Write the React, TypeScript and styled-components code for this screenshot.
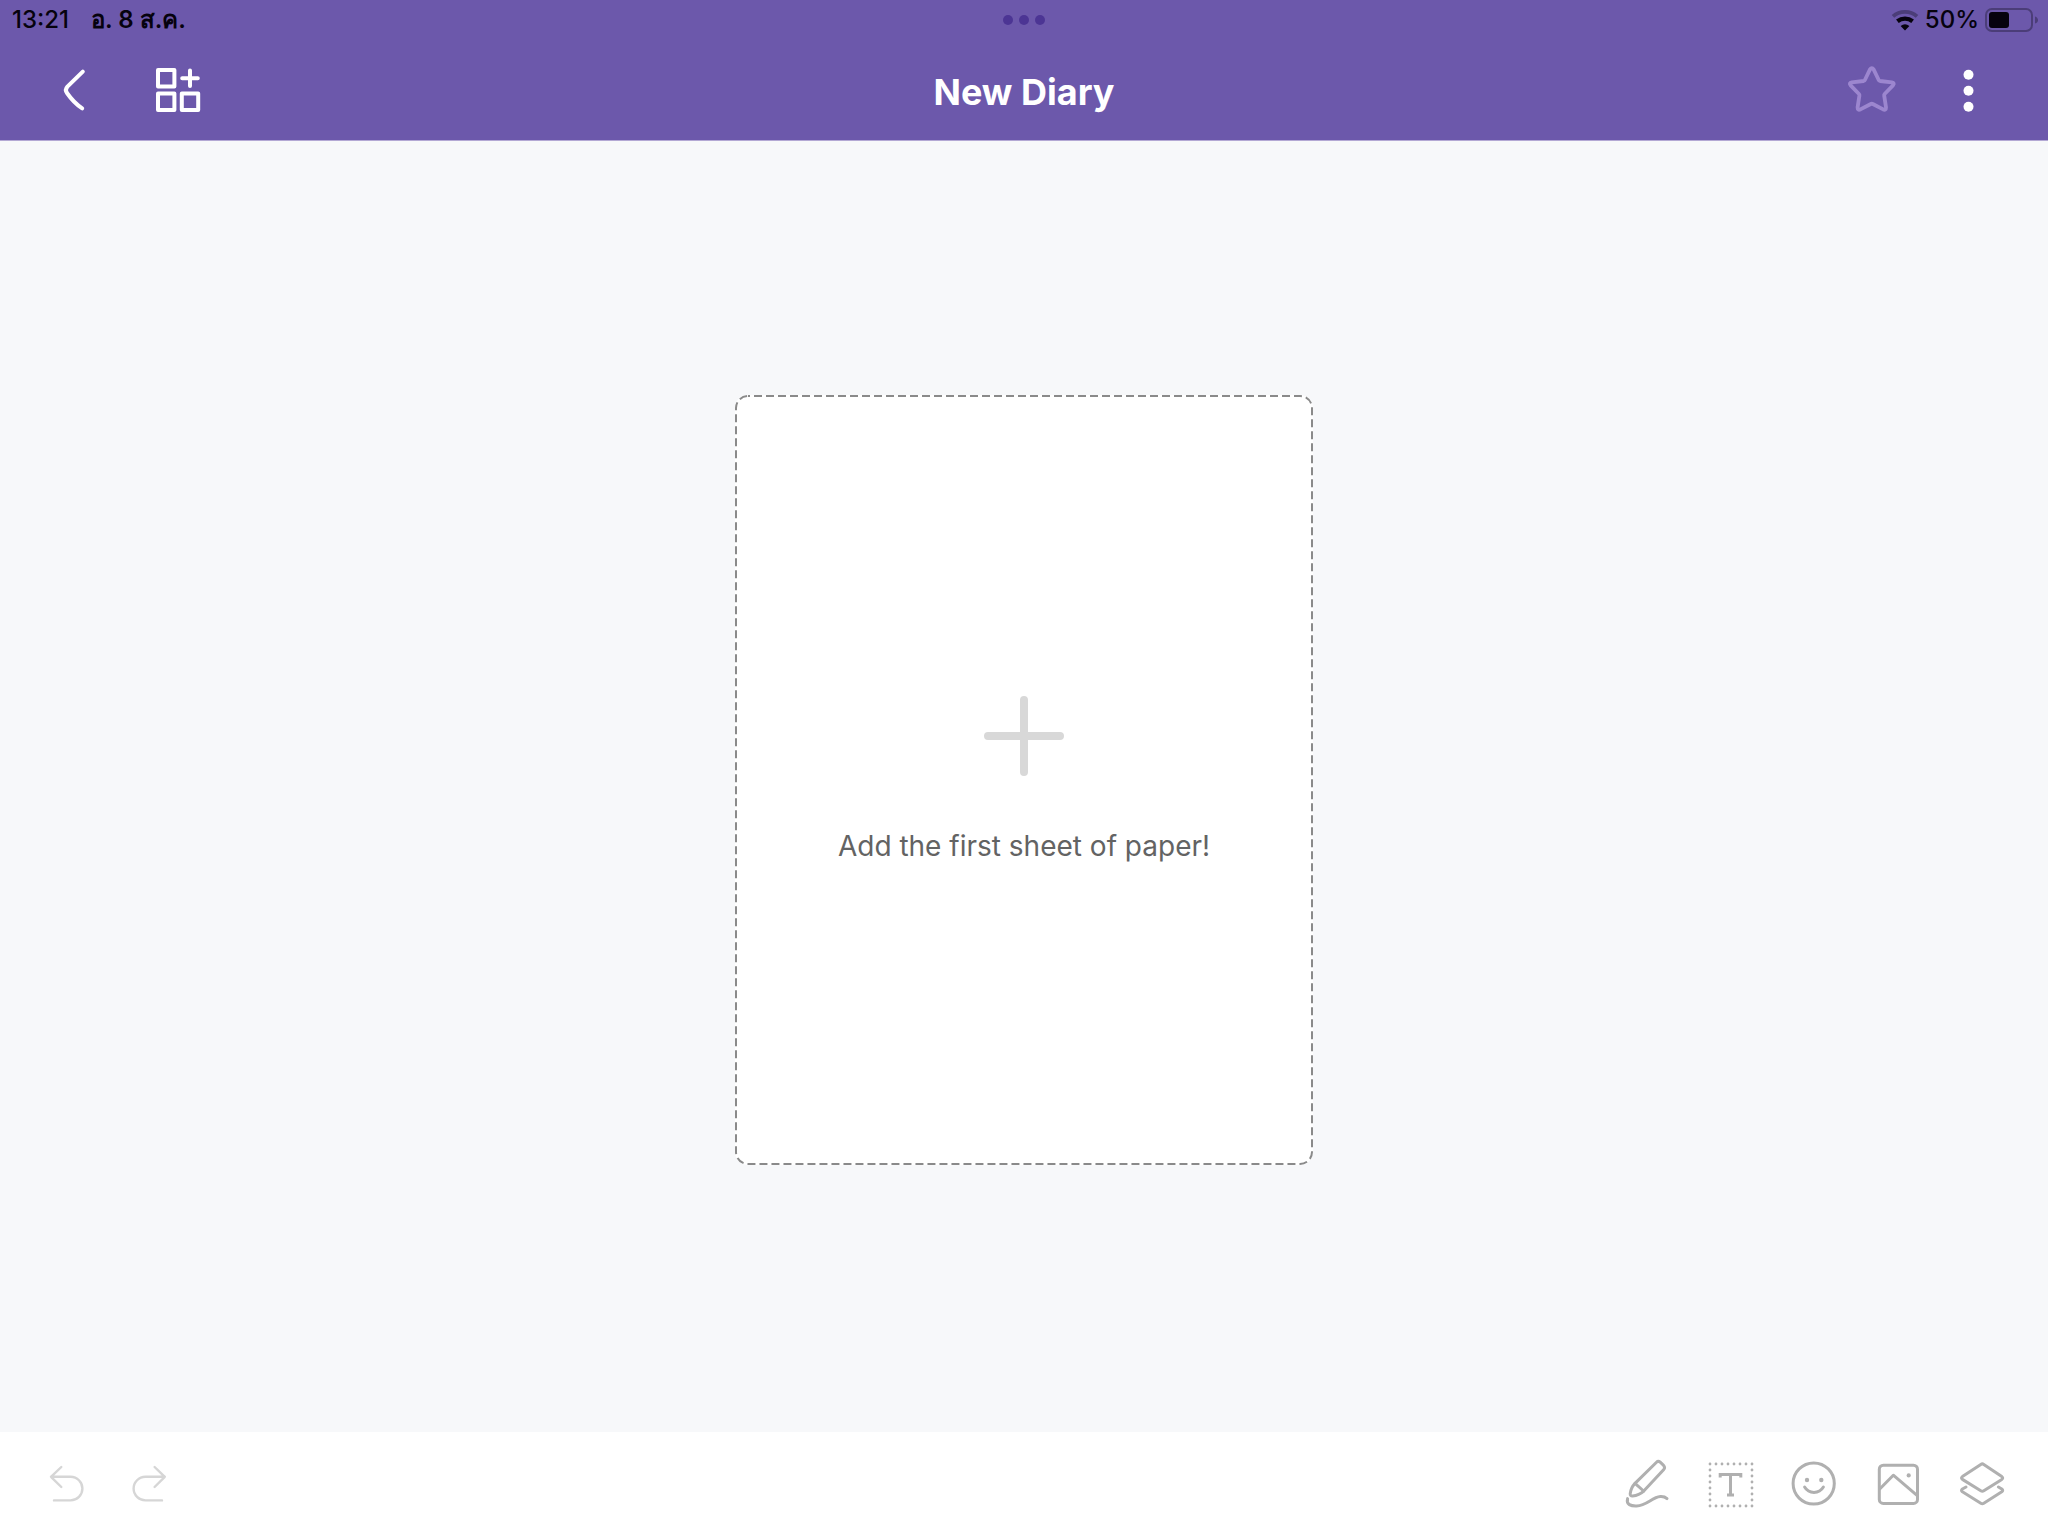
import React from "react";
import styled, { createGlobalStyle } from "styled-components";

const GlobalStyle = createGlobalStyle`
  *, *::before, *::after { box-sizing: border-box; }
  body {
    margin: 0;
    background: #f7f8fa;
    font-family: Inter, "Noto Sans", "Liberation Sans", sans-serif;
  }
`;

const Screen = styled.div`
  display: flex;
  flex-direction: column;
  min-height: 100vh;
`;

const Header = styled.header`
  background: #6c58ab;
  border-bottom: 1px solid #b3a8d4;
`;

const ThreeColumns = styled.div`
  display: grid;
  grid-template-columns: 1fr auto 1fr;
  align-items: center;
`;

const StatusBar = styled(ThreeColumns)`
  height: 40px;
  padding: 0 10px;
  color: #06020e;
  font-size: 24px;
  font-weight: 500;
  line-height: 28px;
`;

const DateText = styled.span`
  font-weight: 600;
`;

const NavBar = styled(ThreeColumns)`
  height: 100px;
  padding: 0 52px;
`;

const Group = styled.div<{ $gap: number; $end?: boolean; $inset?: number }>`
  display: flex;
  align-items: center;
  gap: ${(p) => p.$gap}px;
  justify-content: ${(p) => (p.$end ? "flex-end" : "flex-start")};
  padding: ${(p) => (p.$end ? `0 ${p.$inset ?? 0}px 0 0` : `0 0 0 ${p.$inset ?? 0}px`)};
`;

const Title = styled.h1`
  margin: 0;
  padding-top: 4px;
  color: #fff;
  font-size: 36px;
  font-weight: 700;
  line-height: 48px;
`;

const IconButton = styled.button<{ $color: string }>`
  display: flex;
  width: 48px;
  height: 48px;
  padding: 0;
  border: 0;
  background: none;
  color: ${(p) => p.$color};
  cursor: pointer;
`;

const Glyph = styled.svg`
  display: block;
  overflow: visible;
  fill: none;
  stroke: currentColor;
  stroke-linecap: round;
  stroke-linejoin: round;
`;

const Canvas = styled.main`
  flex: 1;
  display: flex;
  align-items: center;
  justify-content: center;
  padding: 40px 40px 53px;
`;

const Sheet = styled.button`
  position: relative;
  display: flex;
  flex-direction: column;
  align-items: center;
  justify-content: center;
  gap: 50px;
  width: 578px;
  max-width: 100%;
  aspect-ratio: 578 / 770;
  padding: 2px 0 0;
  border: 0;
  border-radius: 13px;
  background: #fff;
  color: #636363;
  font-family: inherit;
  font-size: 28px;
  line-height: 40px;
  cursor: pointer;
`;

const DashedFrame = styled.svg`
  position: absolute;
  inset: 1px;
  width: calc(100% - 2px);
  height: calc(100% - 2px);
  overflow: visible;
  fill: none;
  stroke: #8a8a8a;
  stroke-width: 2;
  stroke-dasharray: 8 4;
  stroke-dashoffset: 6;
`;

const Toolbar = styled.footer`
  display: flex;
  align-items: center;
  justify-content: space-between;
  height: 104px;
  padding: 0 42px;
  background: #fff;
`;

type IconProps = { stroke: number; children: React.ReactNode };

function Icon({ stroke, children }: IconProps) {
  return (
    <Glyph width="48" height="48" viewBox="0 0 48 48" strokeWidth={stroke} aria-hidden="true">
      {children}
    </Glyph>
  );
}

const dot = { fill: "currentColor", stroke: "none" };

const tools = [
  {
    label: "Pen",
    art: (
      <g transform="translate(1 0)">
        <path d="M33.5 2.2 Q35.3 .4 37.2 2.2 L40.6 5.4 Q42.4 7.4 40.8 9.4 L21 30.8 Q16 35.4 9.6 36 Q7 36.2 7.2 33.6 Q8 27.6 12 23.4 Z" />
        <path d="M12 23.4 L20.6 31" />
        <path d="M4.6 38.6 C3 44.6 8 46.2 13.6 46 C24 45.4 29 37.2 37.4 36.6 Q41.6 36.4 44 38.6" />
      </g>
    ),
  },
  {
    label: "Text",
    art: (
      <g transform="translate(1 0)">
        <path d="M3 4 H45 V46 H3 Z" strokeDasharray="0 6" strokeWidth="2.8" />
        <path d="M13.2 17.6 V14.4 H33.8 V17.6 M23.5 14.4 V35 M20 35 H27" strokeLinecap="butt" strokeLinejoin="miter" />
      </g>
    ),
  },
  {
    label: "Sticker",
    art: (
      <>
        <circle cx="23.7" cy="23.5" r="20.6" />
        <circle cx="17" cy="20" r="2.2" {...dot} />
        <circle cx="31.3" cy="20" r="2.2" {...dot} />
        <path d="M14.6 27 Q17.8 32.4 24 32.4 T33.4 27" />
      </>
    ),
  },
  {
    label: "Image",
    art: (
      <>
        <rect x="5.3" y="5.2" width="38.2" height="38.2" rx="4" />
        <path d="M6 28.7 L19.3 15.2 L43 35.4" />
        <circle cx="34.7" cy="15.4" r="2.1" {...dot} />
      </>
    ),
  },
  {
    label: "Layers",
    art: (
      <>
        <path d="M22.8 4.4 Q24.3 3.4 25.8 4.4 L43.8 16.6 Q45.6 18 43.8 19.4 L25.8 30.8 Q24.3 31.8 22.8 30.8 L4.4 19.4 Q2.6 18 4.4 16.6 Z" />
        <path d="M8 27 L4.4 29 Q2.6 30.4 4.4 31.8 L22.8 43.2 Q24.3 44.2 25.8 43.2 L43.8 31.8 Q45.6 30.4 43.8 29 L40.4 27" />
      </>
    ),
  },
];

export default function App() {
  return (
    <Screen>
      <GlobalStyle />
      <Header>
        <StatusBar>
          <Group $gap={22} $inset={2}>
            <span>13:21</span>
            <DateText>อ. 8 ส.ค.</DateText>
          </Group>
          <Glyph width="42" height="10" viewBox="0 0 42 10" aria-hidden="true">
            <g fill="#4c3594" stroke="none">
              <circle cx="5" cy="5" r="5" />
              <circle cx="21" cy="5" r="5" />
              <circle cx="37" cy="5" r="5" />
            </g>
          </Glyph>
          <Group $gap={6} $end>
            <Glyph width="28" height="20" viewBox="0 0 28 20" aria-hidden="true">
              <path d="M2 6.4 Q7 1.9 14 1.9 T26 6.4" stroke="#4b3d78" strokeWidth="3.8" strokeLinecap="butt" />
              <path d="M6.4 11.2 Q9.8 8.6 14 8.6 T21.6 11.2" strokeWidth="4.4" strokeLinecap="butt" />
              <path d="M9.6 16 Q14 12.4 18.4 16 L14 20.4 Z" {...dot} />
            </Glyph>
            <span>50%</span>
            <Glyph width="53" height="24" viewBox="0 0 53 24" aria-hidden="true">
              <rect x="1" y="1" width="46" height="22" rx="6" stroke="#4b3d78" strokeWidth="2" />
              <rect x="4" y="4" width="20" height="16" rx="3" {...dot} />
              <path d="M50 8.4 Q53 9.4 53 12 T50 15.6 Z" fill="#4b3d78" stroke="none" />
            </Glyph>
          </Group>
        </StatusBar>
        <NavBar>
          <Group $gap={54}>
            <IconButton $color="#fff" aria-label="Back">
              <Icon stroke={4}>
                <path d="M30.8 5.6 L15.4 20.6 Q12.6 23.6 15 27 Q21.6 36.6 30.2 42.4" />
              </Icon>
            </IconButton>
            <IconButton $color="#fff" aria-label="Page overview">
              <Icon stroke={4}>
                <rect x="4" y="4" width="16.4" height="16.4" />
                <rect x="4" y="27.6" width="16.4" height="16.4" />
                <rect x="27.8" y="27.6" width="16.4" height="16.4" />
                <path d="M36 4.4 V20 M28.2 12.2 H43.8" />
              </Icon>
            </IconButton>
          </Group>
          <Title>New Diary</Title>
          <Group $gap={48} $end $inset={4}>
            <IconButton $color="#9c86cf" aria-label="Favourite">
              <Icon stroke={3.8}>
                <path d="M22 3.4 Q23.8 .8 25.6 3.4 L30.6 13.8 Q31 14.8 32 15 L43.8 16.4 Q47 17 45 19.4 L36.6 28 Q36 28.6 36.2 29.6 L38 41.4 Q38 44.6 35.2 43.4 L24.8 38 Q23.8 37.4 22.8 38 L12.4 43.4 Q9.6 44.6 9.6 41.4 L11.4 29.6 Q11.6 28.6 11 28 L2.6 19.4 Q.6 17 3.8 16.4 L15.6 15 Q16.6 14.8 17 13.8 Z" />
              </Icon>
            </IconButton>
            <IconButton $color="#fff" aria-label="More options">
              <Icon stroke={0}>
                <circle cx="24.5" cy="8.8" r="5" {...dot} />
                <circle cx="24.5" cy="24.8" r="5" {...dot} />
                <circle cx="24.5" cy="40.8" r="5" {...dot} />
              </Icon>
            </IconButton>
          </Group>
        </NavBar>
      </Header>

      <Canvas>
        <Sheet>
          <DashedFrame aria-hidden="true">
            <rect width="100%" height="100%" rx="12" />
          </DashedFrame>
          <Glyph width="80" height="80" viewBox="0 0 80 80" strokeWidth="8" aria-hidden="true">
            <path d="M40 4 V76 M4 40 H76" stroke="#d8d8d8" />
          </Glyph>
          <span>Add the first sheet of paper!</span>
        </Sheet>
      </Canvas>

      <Toolbar>
        <Group $gap={36}>
          <IconButton $color="#d6d6d6" aria-label="Undo">
            <Icon stroke={2.4}>
              <path d="M19.3 7 L9 16.8 L19.3 27 M9 16.8 H28.6 A11.8 11.8 0 0 1 28.6 40.4 H12" />
            </Icon>
          </IconButton>
          <IconButton $color="#d6d6d6" aria-label="Redo">
            <Icon stroke={2.4}>
              <path d="M28.6 7 L38.8 16.8 L28.6 27 M38.8 16.8 H19.4 A11.8 11.8 0 0 0 19.4 40.4 H36" />
            </Icon>
          </IconButton>
        </Group>
        <Group $gap={36}>
          {tools.map((tool) => (
            <IconButton key={tool.label} $color="#b0b0b0" aria-label={tool.label}>
              <Icon stroke={3}>{tool.art}</Icon>
            </IconButton>
          ))}
        </Group>
      </Toolbar>
    </Screen>
  );
}
